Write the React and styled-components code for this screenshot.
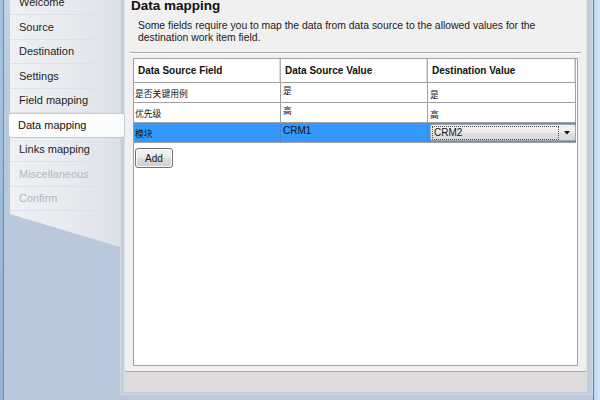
import React from "react";
import styled, { createGlobalStyle, css } from "styled-components";

const GlobalStyle = createGlobalStyle`
  html, body {
    margin: 0;
    padding: 0;
    width: 600px;
    height: 400px;
    overflow: hidden;
    background: #b9c9db;
  }
  body {
    font-family: "Liberation Sans", Arial, "Noto Sans CJK SC", sans-serif;
    color: #1b1b1b;
  }
`;

const Screen = styled.div`
  display: flex;
  width: 600px;
  height: 400px;
  overflow: hidden;
`;

const LeftFrame = styled.div`
  flex: none;
  width: 3px;
  background: linear-gradient(180deg, #a6c2e0 0%, #94b3d5 100%);
  border-right: 1px solid #6f8cae;
`;

const RightFrame = styled.div`
  flex: none;
  width: 6px;
  border-left: 1px solid #6c8099;
  background: linear-gradient(90deg, #bcd5ef 0%, #d0e6fc 100%);
`;

const Workspace = styled.div`
  flex: 1;
  display: flex;
  align-items: flex-start;
  padding-left: 6px;
  background: linear-gradient(180deg, #c5d4e4 0%, #b9c9db 22%, #b9c9db 100%);
`;

const NavWrap = styled.div`
  flex: none;
  width: 110px;
  position: relative;
  z-index: 2;
`;

const Nav = styled.nav`
  width: 110px;
  margin-top: -9.5px;
  padding-bottom: 39px;
  display: flex;
  flex-direction: column;
  background: linear-gradient(90deg, #eef0f4 0%, #e7eaef 55%, #dbe1e8 100%);
  clip-path: polygon(-10px 0, calc(100% + 10px) 0, calc(100% + 10px) 100%, 3px calc(100% - 35px), -10px calc(100% - 38px));
`;

const NavItem = styled.div`
  height: 24.5px;
  box-sizing: border-box;
  display: flex;
  align-items: center;
  padding-left: 9px;
  font-size: 11px;
  color: ${(p) => (p.$disabled ? "#b3b7bd" : "#1e1e1e")};
  border-bottom: 1px solid #dde1e7;
  white-space: nowrap;
  ${(p) =>
    p.$active &&
    css`
      margin-left: -2px;
      margin-right: -5px;
      border: 1px solid #c3c9d2;
      border-radius: 3px;
      background: linear-gradient(180deg, #ffffff 0%, #f9fafb 100%);
      color: #111;
    `}
`;

const MainPanel = styled.div`
  flex: 1;
  height: 415px;
  margin-top: -20px;
  box-sizing: border-box;
  display: flex;
  border: 1px solid #d2d9e2;
  padding: 0 5px 2px 3px;
  background: #c4cedb;
`;

const Content = styled.div`
  flex: 1;
  display: flex;
  flex-direction: column;
  background: #f0f0f0;
  border: 1px solid #d9dfe7;
`;

const Title = styled.h1`
  margin: 16px 0 0 6px;
  font-size: 13.5px;
  line-height: 16px;
  font-weight: bold;
  color: #111;
`;

const Description = styled.p`
  margin: 6px 30px 0 13px;
  font-size: 10.4px;
  line-height: 12px;
  color: #1b1b1b;
`;

const Separator = styled.div`
  margin: 8px 5px 0 5px;
  border-top: 1px solid #a9a9a9;
  border-bottom: 1px solid #ffffff;
`;

const GridBox = styled.div`
  flex: 1;
  margin: 4px 8px 5px 8px;
  background: #ffffff;
  border: 1px solid #a0a0a0;
  display: flex;
  flex-direction: column;
  align-items: flex-start;
`;

const Table = styled.div`
  display: grid;
  grid-template-columns: 147px 147px 148px;
`;

const HeaderCell = styled.div`
  height: 24px;
  box-sizing: border-box;
  display: flex;
  align-items: center;
  padding-left: 4px;
  font-size: 10px;
  font-weight: bold;
  color: #111;
  border-bottom: 1px solid #a0a0a0;
  border-right: 1px solid #b0b0b0;
  box-shadow: inset -1px 0 0 #dcdcdc;
`;

const Cell = styled.div`
  height: 20px;
  box-sizing: border-box;
  padding-left: ${(p) => p.$pl}px;
  padding-top: ${(p) => p.$pt}px;
  font-size: ${(p) => (p.$cjk ? "8.8px" : "10px")};
  line-height: 12px;
  font-family: "Liberation Sans", "Noto Sans CJK SC", sans-serif;
  color: #111;
  border-bottom: 1px solid #a0a0a0;
  border-right: 1px solid ${(p) => (p.$selected ? "#4f86c4" : "#a0a0a0")};
  background: ${(p) => (p.$selected ? "#3399ff" : "#ffffff")};
  white-space: nowrap;
  overflow: hidden;
`;

const ComboCell = styled.div`
  height: 20px;
  box-sizing: border-box;
  padding: 1px 0 1px 2px;
  border-bottom: 1px solid #a0a0a0;
  background: #3399ff;
  display: flex;
`;

const Combo = styled.div`
  flex: 1;
  display: flex;
  align-items: center;
  box-sizing: border-box;
  border: 1px solid #9aa7b5;
  border-radius: 2px;
  background: linear-gradient(180deg, #f4f4f4 0%, #ececec 50%, #e0e0e0 51%, #dadada 100%);
  padding: 0 4px 0 1px;
`;

const ComboText = styled.div`
  flex: none;
  width: 127px;
  box-sizing: border-box;
  height: 14px;
  border: 1px dotted #4a4a4a;
  padding-left: 1px;
  font-size: 10px;
  line-height: 12px;
  color: #111;
`;

const ComboArrow = styled.svg`
  margin-left: auto;
  margin-right: 1px;
  width: 6px;
  height: 4px;
`;

const AddButton = styled.button`
  margin: 5px 0 0 1px;
  width: 38px;
  height: 20px;
  padding: 0;
  border: 1px solid #707070;
  border-radius: 3px;
  background: linear-gradient(180deg, #f2f2f2 0%, #ebebeb 48%, #dddddd 52%, #cfcfcf 100%);
  font-family: "Liberation Sans", Arial, sans-serif;
  font-size: 10px;
  color: #111;
  box-shadow: inset 0 0 0 1px #fcfcfc;
`;

const StatusBar = styled.div`
  height: 19px;
  border-top: 1px solid #aaaaaa;
  background: #e0dbdb;
`;

const navItems = [
  { label: "Welcome" },
  { label: "Source" },
  { label: "Destination" },
  { label: "Settings" },
  { label: "Field mapping" },
  { label: "Data mapping", active: true },
  { label: "Links mapping" },
  { label: "Miscellaneous", disabled: true },
  { label: "Confirm", disabled: true },
];

const rows = [
  { field: "是否关键用例", value: "是", dest: "是" },
  { field: "优先级", value: "高", dest: "高" },
];

export default function App() {
  return (
    <>
      <GlobalStyle />
      <Screen>
        <LeftFrame />
        <Workspace>
          <NavWrap>
            <Nav>
              {navItems.map((it) => (
                <NavItem key={it.label} $active={it.active} $disabled={it.disabled}>
                  {it.label}
                </NavItem>
              ))}
            </Nav>
          </NavWrap>
          <MainPanel>
            <Content>
              <Title>Data mapping</Title>
              <Description>
                Some fields require you to map the data from data source to the allowed values for the
                destination work item field.
              </Description>
              <Separator />
              <GridBox>
                <Table>
                  <HeaderCell>Data Source Field</HeaderCell>
                  <HeaderCell>Data Source Value</HeaderCell>
                  <HeaderCell>Destination Value</HeaderCell>
                  {rows.map((r) => (
                    <React.Fragment key={r.field}>
                      <Cell $pl={1} $pt={5} $cjk>{r.field}</Cell>
                      <Cell $pl={2} $pt={2} $cjk>{r.value}</Cell>
                      <Cell $pl={2} $pt={6} $cjk>{r.dest}</Cell>
                    </React.Fragment>
                  ))}
                  <Cell $pl={1} $pt={5} $cjk $selected>模块</Cell>
                  <Cell $pl={2} $pt={2} $selected>CRM1</Cell>
                  <ComboCell>
                    <Combo>
                      <ComboText>CRM2</ComboText>
                      <ComboArrow viewBox="0 0 6 4">
                        <path d="M0 0 H6 L3 3.5 Z" fill="#111" />
                      </ComboArrow>
                    </Combo>
                  </ComboCell>
                </Table>
                <AddButton>Add</AddButton>
              </GridBox>
              <StatusBar />
            </Content>
          </MainPanel>
        </Workspace>
        <RightFrame />
      </Screen>
    </>
  );
}
